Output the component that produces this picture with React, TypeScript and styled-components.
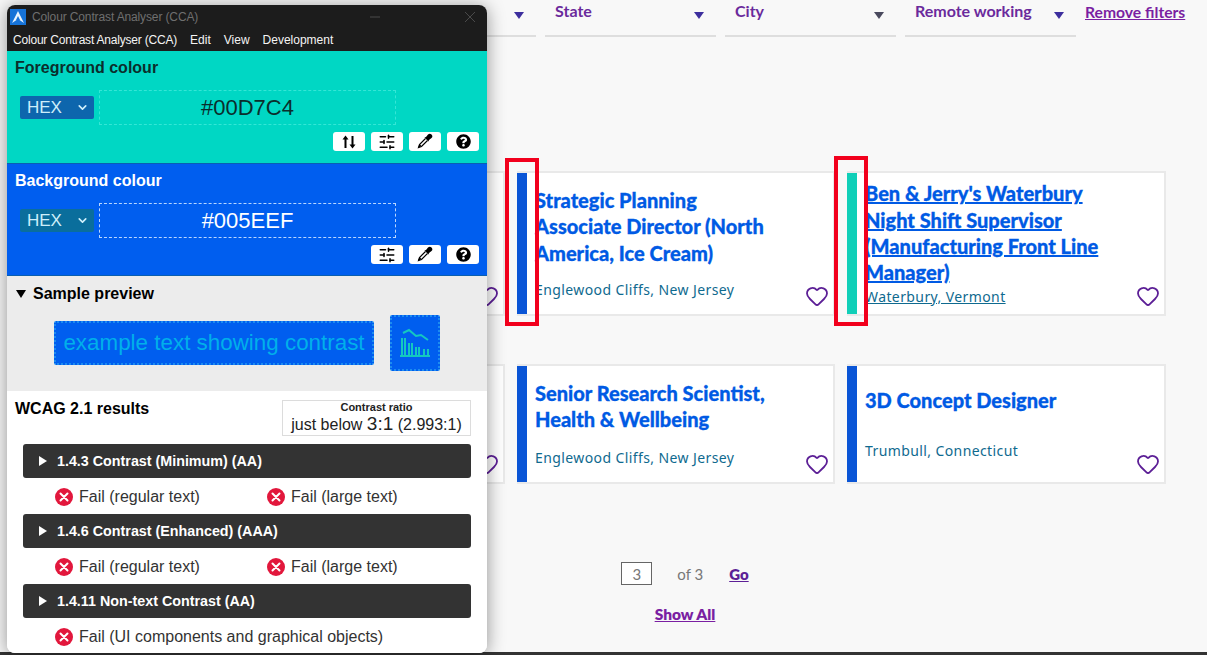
import React from 'react';
import styled, { createGlobalStyle } from 'styled-components';
import { Heart, ChevronDown, SlidersHorizontal } from 'lucide-react';
import { FaQuestionCircle } from 'react-icons/fa';

const GlobalStyle = createGlobalStyle`
  html, body {
    margin: 0;
    height: 100%;
    overflow: hidden;
    background: #f8f8f8;
  }
  * {
    box-sizing: border-box;
  }
`;

// Job board behind the tool window
const Page = styled.div`
  position: relative;
  width: 1207px;
  height: 655px;
  padding: 0 24px 0 187px;
  display: flex;
  flex-direction: column;
  overflow: hidden;
  background: #f8f8f8;
  font-family: 'Lato', 'Noto Sans', sans-serif;
`;

const FilterBar = styled.div`
  display: flex;
  align-items: flex-start;
  gap: 9px;
  margin-left: 178px;
  height: 171px;
`;

const FilterField = styled.div`
  flex: 0 0 171px;
  height: 37px;
  padding: 2px 10px 0 10px;
  display: flex;
  justify-content: space-between;
  border-bottom: 2px solid #dedede;
  color: #6a2a9c;
  font-size: 16px;
  font-weight: 700;
  line-height: 18px;
`;

const FilterArrow = styled.span<{ $dark?: boolean }>`
  width: 0;
  height: 0;
  margin: 10px 2px 0 0;
  border-left: 5px solid transparent;
  border-right: 5px solid transparent;
  border-top: 7px solid ${(p) => (p.$dark ? '#4a4a5e' : '#3d2f9e')};
`;

const RemoveLink = styled.a`
  margin: 3px 0 0 0;
  color: #7a1fa2;
  font-size: 15.7px;
  font-weight: 700;
  line-height: 19px;
  white-space: nowrap;
  text-decoration: underline;
`;

const CardGrid = styled.div`
  display: grid;
  grid-template-columns: 318px 318px 319px;
  grid-template-rows: 145px 120px;
  gap: 48px 12px;
`;

const Card = styled.div`
  display: flex;
  background: #fff;
  border: 2px solid #e9e9e9;
  border-left: 0;
  min-width: 0;
`;

const Stripe = styled.div<{ $teal?: boolean }>`
  flex: 0 0 10px;
  margin-right: 8px;
  background: ${(p) => (p.$teal ? '#10cfb8' : '#0a55d6')};
`;

const CardBody = styled.div`
  flex: 1;
  min-width: 0;
  padding-right: 52px;
  display: flex;
  flex-direction: column;
  justify-content: center;
`;

const JobTitle = styled.a<{ $underline?: boolean }>`
  color: #005ae4;
  font-size: 20px;
  font-weight: 900;
  line-height: 26.3px;
  -webkit-text-stroke: 0.3px #005ae4;
  text-decoration: ${(p) => (p.$underline ? 'underline' : 'none')};
`;

const JobPlace = styled.a<{ $gap: number; $underline?: boolean }>`
  margin-top: ${(p) => p.$gap}px;
  color: #0f6a8f;
  font-family: 'Noto Sans', sans-serif;
  font-size: 14px;
  letter-spacing: 0.4px;
  line-height: 20px;
  text-decoration: ${(p) => (p.$underline ? 'underline' : 'none')};
`;

const HeartSlot = styled.div`
  align-self: flex-end;
  margin: 0 4px 6px -28px;
  height: 24px;
  color: #5c1f96;
`;

const Pager = styled.div`
  margin-top: 78px;
  display: flex;
  justify-content: center;
  align-items: center;
  height: 23px;
  color: #777;
  font-size: 15px;
`;

const PageInput = styled.div`
  width: 31px;
  height: 23px;
  margin-right: 25px;
  border: 1px solid #666;
  background: #fff;
  text-align: center;
  line-height: 22px;
`;

const GoLink = styled.a`
  margin-left: 26px;
  padding-top: 1px;
  color: #5c1f96;
  font-weight: 800;
  text-decoration: underline;
`;

const ShowAll = styled.a`
  margin-top: 19px;
  text-align: center;
  color: #7a1fa2;
  font-size: 15.5px;
  font-weight: 800;
  line-height: 20px;
  text-decoration: underline;
`;

const BottomEdge = styled.div`
  position: absolute;
  left: 0;
  right: 0;
  bottom: 0;
  height: 3px;
  background: #333;
`;

const Highlight = styled.div<{ $left: number; $top: number; $height: number }>`
  position: absolute;
  left: ${(p) => p.$left}px;
  top: ${(p) => p.$top}px;
  width: 34px;
  height: ${(p) => p.$height}px;
  border: 4px solid #f2001d;
`;

// Colour Contrast Analyser window
const ToolWindow = styled.div`
  position: absolute;
  left: 7px;
  top: 5px;
  width: 480px;
  height: 648px;
  display: flex;
  flex-direction: column;
  overflow: hidden;
  border-radius: 8px;
  background: #fff;
  box-shadow: 0 2px 18px rgba(0, 0, 0, 0.42);
  font-family: 'Liberation Sans', Arial, sans-serif;
  color: #000;
`;

const TitleBar = styled.div`
  flex: 0 0 24px;
  display: flex;
  align-items: center;
  padding-left: 3px;
  background: #1c1c1c;
  color: #6f6f6f;
  font-size: 12px;
`;

const AppTitle = styled.span`
  margin-left: 6px;
  flex: 1;
  letter-spacing: -0.13px;
`;

const WindowControl = styled.svg<{ $right: number }>`
  margin-right: ${(p) => p.$right}px;
  stroke: #4a4a4a;
  fill: none;
`;

const MenuBar = styled.div`
  flex: 0 0 22px;
  display: flex;
  align-items: center;
  gap: 13px;
  padding: 0 0 1px 6px;
  background: #1c1c1c;
  color: #f4f4f4;
  font-size: 12px;
`;

const MenuItem = styled.span<{ $tight?: boolean }>`
  letter-spacing: ${(p) => (p.$tight ? '-0.2px' : '0')};
`;

const ColourPanel = styled.section<{ $bg: string; $fg: string; $height: number }>`
  flex: 0 0 ${(p) => p.$height}px;
  padding: 8px 8px 0;
  background: ${(p) => p.$bg};
  color: ${(p) => p.$fg};
  border-bottom: 1px solid #0a5fb0;
`;

const PanelHeading = styled.h2`
  margin: 0;
  font-size: 16px;
  line-height: 18px;
  font-weight: 700;
`;

const ColourRow = styled.div`
  display: flex;
  align-items: center;
  gap: 5px;
  margin: 13px 0 0 5px;
`;

const FormatSelect = styled.div<{ $bg: string }>`
  width: 74px;
  height: 23px;
  padding: 0 5px 0 7px;
  display: flex;
  align-items: center;
  justify-content: space-between;
  border-radius: 2px;
  background: ${(p) => p.$bg};
  color: #cdeefa;
  font-size: 17px;
`;

const HexField = styled.div<{ $line: string }>`
  width: 297px;
  height: 35px;
  display: flex;
  align-items: center;
  justify-content: center;
  border: 1px dashed ${(p) => p.$line};
  font-size: 22px;
`;

const ToolButtons = styled.div`
  display: flex;
  justify-content: flex-end;
  gap: 6px;
  margin-top: 7px;
`;

const ToolButton = styled.div`
  width: 32px;
  height: 19px;
  display: flex;
  align-items: center;
  justify-content: center;
  border-radius: 3px;
  background: #fff;
  color: #000;
`;

const PreviewPanel = styled.section`
  flex: 0 0 115px;
  padding: 9px 8px 0;
  background: #ececec;
`;

const PreviewHeading = styled.h2`
  margin: 0;
  display: flex;
  align-items: center;
  gap: 7px;
  font-size: 16px;
  line-height: 17px;
  font-weight: 700;
`;

const DownCaret = styled.span`
  margin-left: 1px;
  width: 0;
  height: 0;
  border-left: 5px solid transparent;
  border-right: 5px solid transparent;
  border-top: 8px solid #000;
`;

const PreviewRow = styled.div`
  display: flex;
  align-items: center;
  gap: 16px;
  margin: 13px 0 0 39px;
`;

const SampleText = styled.div`
  width: 320px;
  height: 44px;
  display: flex;
  align-items: center;
  justify-content: center;
  background: #005eef;
  border: 2px dotted #1c8cf0;
  border-radius: 2px;
  color: #00b0ea;
  font-size: 22.4px;
`;

const SampleIcon = styled.div`
  width: 50px;
  height: 56px;
  display: flex;
  align-items: center;
  justify-content: center;
  background: #005eef;
  border: 2px dotted #1c8cf0;
  border-radius: 2px;
`;

const ResultsPanel = styled.section`
  flex: 1;
  padding: 9px 16px 0 8px;
  background: #fff;
`;

const ResultsHead = styled.div`
  display: flex;
  justify-content: space-between;
  align-items: flex-start;
  margin-bottom: 8px;
`;

const ResultsHeading = styled.h2`
  margin: 0;
  font-size: 16px;
  line-height: 17px;
  font-weight: 700;
`;

const RatioBox = styled.div`
  width: 189px;
  height: 36px;
  border: 1px solid #dcdcdc;
  text-align: center;
  color: #222;
`;

const RatioLabel = styled.div`
  font-size: 11px;
  font-weight: 700;
  line-height: 12px;
`;

const RatioValue = styled.div`
  font-size: 16px;
  line-height: 22px;
  white-space: nowrap;
`;

const RatioBig = styled.span`
  font-size: 19px;
`;

const Criteria = styled.div`
  margin-left: 8px;
`;

const CriterionBar = styled.div`
  height: 34px;
  display: flex;
  align-items: center;
  gap: 10px;
  padding-left: 16px;
  border-radius: 3px;
  background: #333;
  color: #fff;
  font-size: 14.3px;
  font-weight: 700;
`;

const RightCaret = styled.span`
  width: 0;
  height: 0;
  border-top: 5px solid transparent;
  border-bottom: 5px solid transparent;
  border-left: 8px solid #fff;
`;

const ResultRow = styled.div`
  height: 36px;
  display: flex;
  align-items: center;
  padding: 1px 0 0 32px;
`;

const ResultItem = styled.div<{ $width?: number }>`
  width: ${(p) => (p.$width ? `${p.$width}px` : 'auto')};
  display: flex;
  align-items: center;
  gap: 6px;
  color: #333;
  font-size: 16px;
  white-space: nowrap;
`;

const FailIcon = () => (
  <svg width="18" height="18" viewBox="0 0 18 18">
    <circle cx="9" cy="9" r="9" fill="#e2173c" />
    <path d="M5.5 5.5l7 7M12.5 5.5l-7 7" stroke="#fff" strokeWidth="2" strokeLinecap="round" />
  </svg>
);

const SwapIcon = () => (
  <svg width="16" height="14" viewBox="0 0 16 14" fill="#000" stroke="#000">
    <path d="M4.5 13V3" strokeWidth="2" />
    <path d="M1.5 4.5L4.5 .5l3 4z" stroke="none" />
    <path d="M11.5 1v10" strokeWidth="2" />
    <path d="M8.5 9.5l3 4 3-4z" stroke="none" />
  </svg>
);

const DropperIcon = () => (
  <svg width="18" height="17" viewBox="0 0 18 17">
    <path d="M9.5 5.5L3.5 11.5 2.5 14.5 5.5 13.5 11.5 7.5" fill="#fff" stroke="#000" strokeWidth="1.2" />
    <path d="M2 15l1.5-4 2 2z" fill="#000" />
    <path d="M8.5 4.5l1.5-.5 2-2.5a2 2 0 0 1 3.5 3.5l-2.5 2-.5 1.5z" fill="#000" />
  </svg>
);

const AppLogo = () => (
  <svg width="16" height="16" viewBox="0 0 16 16">
    <rect width="16" height="16" fill="#1673d8" />
    <path d="M8 2l6 12-6-4-6 4z" fill="#e9f4ff" />
    <path d="M8 7l2 4H6z" fill="#1673d8" />
  </svg>
);

const ChartIcon = () => (
  <svg width="32" height="30" viewBox="0 0 32 30" fill="none" stroke="#14c8c0" strokeWidth="2">
    <path d="M1 28h30" />
    <path d="M3 27V10M6 27V10M10 27V15M13 27V15M17 27V19M20 27V19M25 27V21M29 27V21" />
    <path d="M4 5l6-3 7 6 5-1 7 5" />
  </svg>
);

const ColourTools = ({ swap }: { swap?: boolean }) => (
  <ToolButtons>
    {swap && <ToolButton><SwapIcon /></ToolButton>}
    <ToolButton><SlidersHorizontal size={18} strokeWidth={2} /></ToolButton>
    <ToolButton><DropperIcon /></ToolButton>
    <ToolButton><FaQuestionCircle size={15} /></ToolButton>
  </ToolButtons>
);

const jobs = [
  { id: 0, title: '', place: '', gap: 0 },
  { id: 1, title: 'Strategic Planning Associate Director (North America, Ice Cream)', place: 'Englewood Cliffs, New Jersey', gap: 14 },
  { id: 2, title: "Ben & Jerry's Waterbury Night Shift Supervisor (Manufacturing Front Line Manager)", place: 'Waterbury, Vermont', gap: 1, teal: true },
  { id: 3, title: '', place: '', gap: 0 },
  { id: 4, title: 'Senior Research Scientist, Health & Wellbeing', place: 'Englewood Cliffs, New Jersey', gap: 16 },
  { id: 5, title: '3D Concept Designer', place: 'Trumbull, Connecticut', gap: 28 },
];

const filters = ['', 'State', 'City', 'Remote working'];

export default function App() {
  return (
    <Page>
      <GlobalStyle />
      <FilterBar>
        {filters.map((name) => (
          <FilterField key={name}>
            <span>{name}</span>
            <FilterArrow $dark={name === 'City'} />
          </FilterField>
        ))}
        <RemoveLink>Remove filters</RemoveLink>
      </FilterBar>

      <CardGrid>
        {jobs.map((job) => (
          <Card key={job.id}>
            <Stripe $teal={job.teal} />
            <CardBody>
              <JobTitle $underline={job.teal}>{job.title}</JobTitle>
              <JobPlace $gap={job.gap} $underline={job.teal}>{job.place}</JobPlace>
            </CardBody>
            <HeartSlot><Heart size={24} strokeWidth={1.8} /></HeartSlot>
          </Card>
        ))}
      </CardGrid>

      <Pager>
        <PageInput>3</PageInput>
        <span>of 3</span>
        <GoLink>Go</GoLink>
      </Pager>
      <ShowAll>Show All</ShowAll>
      <BottomEdge />

      <Highlight $left={505} $top={158} $height={168} />
      <Highlight $left={834} $top={156} $height={170} />

      <ToolWindow>
        <TitleBar>
          <AppLogo />
          <AppTitle>Colour Contrast Analyser (CCA)</AppTitle>
          <WindowControl $right={85} width="10" height="10" viewBox="0 0 10 10">
            <path d="M0 5h10" />
          </WindowControl>
          <WindowControl $right={12} width="10" height="10" viewBox="0 0 10 10">
            <path d="M0 0l10 10M10 0L0 10" />
          </WindowControl>
        </TitleBar>
        <MenuBar>
          <MenuItem $tight>Colour Contrast Analyser (CCA)</MenuItem>
          <MenuItem>Edit</MenuItem>
          <MenuItem>View</MenuItem>
          <MenuItem>Development</MenuItem>
        </MenuBar>

        <ColourPanel $bg="#00d7c4" $fg="#0b2e2c" $height={113}>
          <PanelHeading>Foreground colour</PanelHeading>
          <ColourRow>
            <FormatSelect $bg="#0d66ad">HEX<ChevronDown size={13} strokeWidth={3} /></FormatSelect>
            <HexField $line="#35e6d6">#00D7C4</HexField>
          </ColourRow>
          <ColourTools swap />
        </ColourPanel>

        <ColourPanel $bg="#005eef" $fg="#fff" $height={112}>
          <PanelHeading>Background colour</PanelHeading>
          <ColourRow>
            <FormatSelect $bg="#0a6e9c">HEX<ChevronDown size={13} strokeWidth={3} /></FormatSelect>
            <HexField $line="#b9d6ff">#005EEF</HexField>
          </ColourRow>
          <ColourTools />
        </ColourPanel>

        <PreviewPanel>
          <PreviewHeading><DownCaret />Sample preview</PreviewHeading>
          <PreviewRow>
            <SampleText>example text showing contrast</SampleText>
            <SampleIcon><ChartIcon /></SampleIcon>
          </PreviewRow>
        </PreviewPanel>

        <ResultsPanel>
          <ResultsHead>
            <ResultsHeading>WCAG 2.1 results</ResultsHeading>
            <RatioBox>
              <RatioLabel>Contrast ratio</RatioLabel>
              <RatioValue>just below <RatioBig>3:1</RatioBig> (2.993:1)</RatioValue>
            </RatioBox>
          </ResultsHead>
          <Criteria>
            <CriterionBar><RightCaret />1.4.3 Contrast (Minimum) (AA)</CriterionBar>
            <ResultRow>
              <ResultItem $width={212}><FailIcon />Fail (regular text)</ResultItem>
              <ResultItem><FailIcon />Fail (large text)</ResultItem>
            </ResultRow>
            <CriterionBar><RightCaret />1.4.6 Contrast (Enhanced) (AAA)</CriterionBar>
            <ResultRow>
              <ResultItem $width={212}><FailIcon />Fail (regular text)</ResultItem>
              <ResultItem><FailIcon />Fail (large text)</ResultItem>
            </ResultRow>
            <CriterionBar><RightCaret />1.4.11 Non-text Contrast (AA)</CriterionBar>
            <ResultRow>
              <ResultItem><FailIcon />Fail (UI components and graphical objects)</ResultItem>
            </ResultRow>
          </Criteria>
        </ResultsPanel>
      </ToolWindow>
    </Page>
  );
}
